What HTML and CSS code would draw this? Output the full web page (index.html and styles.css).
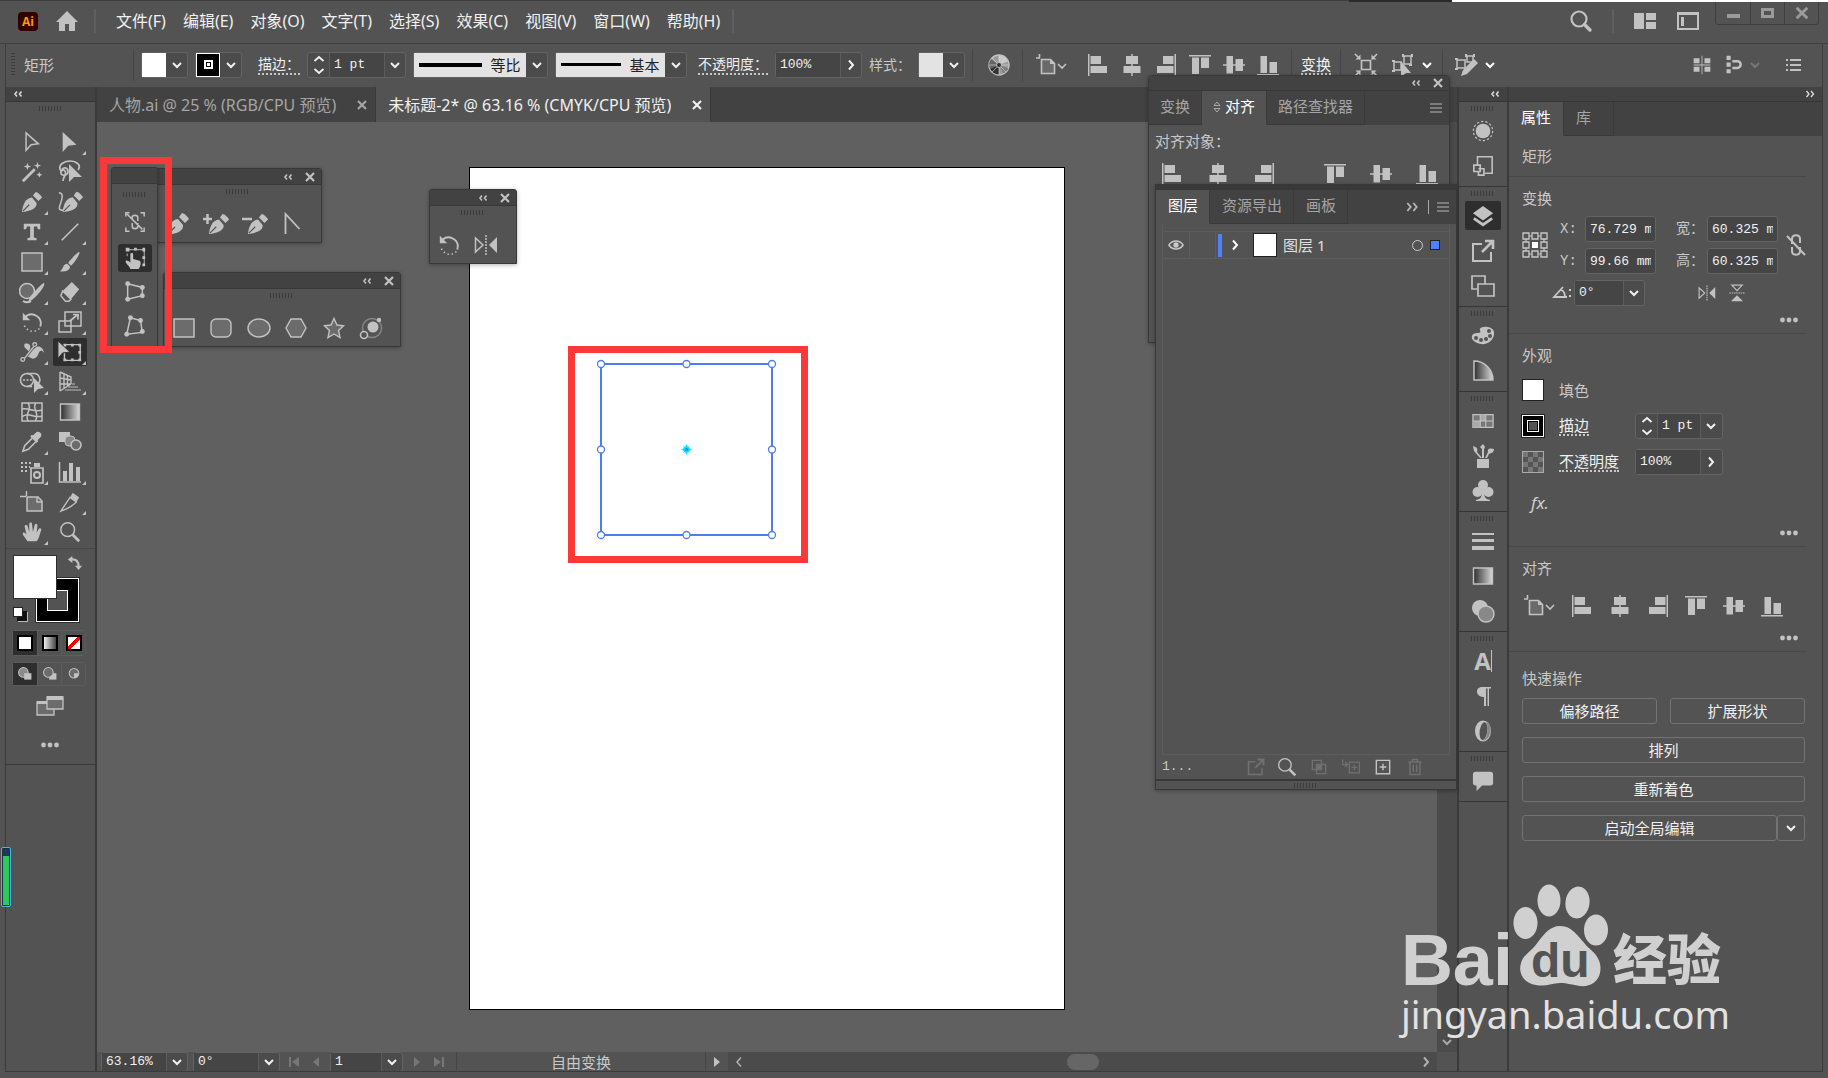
FILE: index.html
```html
<!DOCTYPE html>
<html lang="zh-CN">
<head>
    <meta charset="UTF-8">
    <meta name="viewport" content="width=device-width, initial-scale=1.0">
    <title>未标题-2* @ 63.16 % (CMYK/CPU 预览)</title>
    <link rel="stylesheet" href="styles.css">
</head>
<body>
    <!-- icon library -->
    <svg class="sprite" width="0" height="0" aria-hidden="true">
        <defs>
            <linearGradient id="fade"><stop offset="0" stop-color="#2e2e2e"/><stop offset="1" stop-color="#d8d8d8"/></linearGradient>
        </defs>
        <symbol id="down" viewBox="0 0 12 12"><path d="M2 4l4 4 4-4" fill="none" stroke="currentColor" stroke-width="2"/></symbol>
        <symbol id="right" viewBox="0 0 12 12"><path d="M4 1.500l4 4.500-4 4.500" fill="none" stroke="currentColor" stroke-width="2"/></symbol>
        <symbol id="left" viewBox="0 0 12 12"><path d="M8 1.500L4 6l4 4.500" fill="none" stroke="currentColor" stroke-width="1.500"/></symbol>
        <symbol id="spin" viewBox="0 0 12 20"><path d="M1.500 6L6 2l4.500 4M1.500 14L6 18l4.500-4" fill="none" stroke="currentColor" stroke-width="1.800"/></symbol>
        <symbol id="updown" viewBox="0 0 8 12"><path d="M1 4.500L4 1l3 3.500zM1 7.500L4 11l3-3.500z" fill="none" stroke="currentColor"/></symbol>
        <symbol id="close" viewBox="0 0 12 12"><path d="M2 2l8 8M10 2l-8 8" stroke="currentColor" stroke-width="2.200"/></symbol>
        <symbol id="collapse" viewBox="0 0 12 12"><path d="M5 3.500L3 6l2 2.500M9.500 3.500l-2 2.500 2 2.500" fill="none" stroke="currentColor" stroke-width="1.600"/></symbol>
        <symbol id="expand" viewBox="0 0 12 12"><path d="M2.500 3l2.500 3-2.500 3M7 3l2.500 3L7 9" fill="none" stroke="currentColor" stroke-width="1.400"/></symbol>
        <symbol id="menu" viewBox="0 0 12 12"><path d="M0 2h12M0 6h12M0 10h12" stroke="currentColor" stroke-width="1.200"/></symbol>
        <symbol id="play" viewBox="0 0 12 12"><path d="M3 1l6 5-6 5z" fill="currentColor"/></symbol>
        <symbol id="back" viewBox="0 0 12 12"><path d="M9 1L3 6l6 5z" fill="currentColor"/></symbol>
        <symbol id="first" viewBox="0 0 12 12"><path d="M11 1L4 6l7 5zM1 1h2v10H1z" fill="currentColor"/></symbol>
        <symbol id="last" viewBox="0 0 12 12"><path d="M1 1l7 5-7 5zM9 1h2v10H9z" fill="currentColor"/></symbol>
        <symbol id="dots" viewBox="0 0 18 6"><g fill="currentColor"><circle cx="2.500" cy="3" r="2.400"/><circle cx="9" cy="3" r="2.400"/><circle cx="15.500" cy="3" r="2.400"/></g></symbol>
        <symbol id="home" viewBox="0 0 24 24"><path d="M12 2l11 11h-3v9h-6v-7h-4v7H4v-9H1z" fill="currentColor"/></symbol>
        <symbol id="search" viewBox="0 0 24 24"><circle cx="10" cy="10" r="7.500" fill="none" stroke="currentColor" stroke-width="2.200"/><path d="M15.500 15.500L21 21" stroke="currentColor" stroke-width="3.500" stroke-linecap="round"/></symbol>
        <symbol id="arrange" viewBox="0 0 24 24"><path d="M1 4h10v16H1zM13 4h10v7H13zM13 13h10v7H13z" fill="currentColor"/></symbol>
        <symbol id="workspace" viewBox="0 0 24 24"><path d="M2 4h20v16H2z" fill="none" stroke="currentColor" stroke-width="2"/><path d="M5 8h3v9H5zM2 4h20v2H2z" fill="currentColor"/></symbol>

        <symbol id="al-left" viewBox="0 0 24 24"><path d="M2 1h1.500v22H2zM4.500 3h10.500v8H4.500zM4.500 13H21v7H4.500z" fill="currentColor"/></symbol>
        <symbol id="al-hc" viewBox="0 0 24 24"><path d="M11.200 1h1.500v22h-1.500zM6 3h12v8H6zM3.500 13h17v7h-17z" fill="currentColor"/></symbol>
        <symbol id="al-right" viewBox="0 0 24 24"><path d="M20.500 1H22v22h-1.500zM9 3h10.500v8H9zM3 13h16.500v7H3z" fill="currentColor"/></symbol>
        <symbol id="al-top" viewBox="0 0 24 24"><path d="M1 2h22v1.500H1zM4 4.500h7V21H4zM13 4.500h8V15h-8z" fill="currentColor"/></symbol>
        <symbol id="al-vc" viewBox="0 0 24 24"><path d="M1 11.200h22v1.500H1zM4.500 3h6.500v17.500H4.500zM13.500 6H21v12h-7.500z" fill="currentColor"/></symbol>
        <symbol id="al-bottom" viewBox="0 0 24 24"><path d="M1 21h22v1.500H1zM4.500 3H11v17H4.500zM13.500 9H21v11h-7.500z" fill="currentColor"/></symbol>
        <symbol id="align-to" viewBox="0 0 34 24"><path d="M7.500 6.500h9l4 4v10h-13z" fill="#6a6a6a" stroke="currentColor" stroke-width="1.600"/><path d="M16 6l5 5h-5z" fill="currentColor"/><path d="M2 5h4M5.500 1v4M24 11l4 4 4-4" fill="none" stroke="currentColor" stroke-width="1.600"/></symbol>
        <symbol id="wheel" viewBox="0 0 24 24"><circle cx="12" cy="12" r="10" fill="#9a9a9a" stroke="currentColor" stroke-width="1.400"/><path d="M12 12l-9 3.500a10 10 0 0 0 9 6z" fill="#333"/><path d="M12 12l-9 3.500A10 10 0 0 1 4 6z" fill="#666"/><path d="M12 12V2.500a10 10 0 0 1 9 6z" fill="#c8c8c8"/><path d="M12 12l9.500 3.500a10 10 0 0 1-5 5z" fill="#7c7c7c"/><path d="M12 2.500v19M2.500 12h19M5 5l14 14M19 5L5 19" stroke="#ddd" stroke-width=".6"/><circle cx="12" cy="12" r="2.500" fill="#333" stroke="#bbb"/></symbol>
        <symbol id="isolate" viewBox="0 0 24 24"><path d="M7.500 7.500h9v9h-9z" fill="none" stroke="currentColor" stroke-width="1.700"/><path d="M1 1l5 5M23 1l-5 5M1 23l5-5M23 23l-5-5" stroke="currentColor" stroke-width="1.700"/><path d="M6.500 1.500v5h-5zM17.500 1.500v5h5zM6.500 22.500v-5h-5zM17.500 22.500v-5h5z" fill="currentColor"/></symbol>
        <symbol id="similar" viewBox="0 0 24 24"><path d="M3 9h7v8H3zM13 3h7v8h-7z" fill="none" stroke="currentColor" stroke-width="1.500"/><path d="M1 8h3M1 18h3M12 1v3M21 1v3M21 12h-3" stroke="currentColor" stroke-width="2"/><path d="M10 8l10 12h-5l-5 4z" fill="currentColor"/></symbol>
        <symbol id="edit-similar" viewBox="0 0 24 24"><path d="M3 7h8v8H3zM13 3h6v6h-6z" fill="none" stroke="currentColor" stroke-width="1.500"/><path d="M1 6h3M1 16h3M12 1v3M20 1v3" stroke="currentColor" stroke-width="2"/><path d="M7 23l2-6L20 6l4 4-11 11z" fill="currentColor"/></symbol>
        <symbol id="snap-grid" viewBox="0 0 24 24"><path d="M2 4h7v6H2zM15 4h7v6h-7zM2 14h7v6H2zM15 14h7v6h-7zM11.500 1h1v22h-1zM2 11.500h20v1H2z" fill="currentColor"/></symbol>
        <symbol id="snap-point" viewBox="0 0 24 24"><path d="M3 1h5v5H3zM3 9h5v5H3zM3 17h5v5H3z" fill="currentColor"/><path d="M10 7.500h6a4 4 0 0 1 0 8h-6" fill="none" stroke="currentColor" stroke-width="3"/></symbol>
        <symbol id="list" viewBox="0 0 16 16"><path d="M1 3h2M1 8h2M1 13h2M5 3h11M5 8h11M5 13h11" stroke="currentColor" stroke-width="2"/></symbol>

        <symbol id="select" viewBox="0 0 24 24"><path d="M5.500 2v19l5.500-6 8-1z" fill="none" stroke="currentColor" stroke-width="1.600"/></symbol>
        <symbol id="direct" viewBox="0 0 24 24"><path d="M4 1v22l6-7 9-1z" fill="currentColor"/></symbol>
        <symbol id="wand" viewBox="0 0 24 24"><path d="M2 22L15 9" stroke="currentColor" stroke-width="3"/><path d="M7 2l1 3 3 1-3 1-1 3-1-3-3-1 3-1zM18 1l1 3 3 1-3 1-1 3-1-3-3-1 3-1zM20 12l1 2 2 1-2 1-1 2-1-2-2-1 2-1z" fill="currentColor"/></symbol>
        <symbol id="lasso" viewBox="0 0 24 24"><path d="M3 11C-1 5 6 1 12 1s12 4 8 9M5 11c-3-3 4-5 5 0s-8 6-7 1 6-1 4 3-2 4-2 6" fill="none" stroke="currentColor" stroke-width="1.700"/><path d="M11 4v18l5-5h8z" fill="currentColor"/></symbol>
        <symbol id="pen" viewBox="0 0 24 24"><path d="M1 23C2 14 5 8 12 7l5 6c1 6-7 9-16 10z" fill="currentColor"/><path d="M13 5l3-4c2 0 6 4 7 6l-4 4z" fill="currentColor"/><path d="M2 22l7-7" stroke="#535353" stroke-width="1.200"/></symbol>
        <symbol id="curve-pen" viewBox="0 0 28 24"><path d="M6 23c1-9 4-15 11-16l5 6c1 6-7 9-16 10z" fill="currentColor"/><path d="M18 5l3-4c2 0 6 4 7 6l-4 4z" fill="currentColor"/><path d="M7 22l7-7" stroke="#535353" stroke-width="1.200"/><path d="M2 2c5 0 4 6 2 11s-3 8 3 8" fill="none" stroke="currentColor" stroke-width="1.600"/></symbol>
        <symbol id="type" viewBox="0 0 24 24"><path d="M3 3h18v6h-2.500l-1-3H14v12l3 .8V21H7v-2.200l3-.8V6H6.500l-1 3H3z" fill="currentColor"/></symbol>
        <symbol id="line" viewBox="0 0 24 24"><path d="M3 21L21 3" stroke="currentColor" stroke-width="1.800"/></symbol>
        <symbol id="rect" viewBox="0 0 24 24"><path d="M2 3h20v18H2z" fill="#6c6c6c" stroke="currentColor" stroke-width="1.500"/></symbol>
        <symbol id="brush" viewBox="0 0 24 24"><path d="M22 1c2 1-5 12-9 15l-3-3C13 9 20 1 22 1zM9 14l3 3c0 5-6 6-11 5 4-2 3-8 8-8z" fill="currentColor"/></symbol>
        <symbol id="shaper" viewBox="0 0 26 24"><circle cx="8" cy="11" r="7.500" fill="#6c6c6c" stroke="currentColor" stroke-width="1.500"/><path d="M25 3c2 2-6 12-11 16-2 2-5 3-5 3l2-5C15 12 24 2 25 3z" fill="currentColor"/><path d="M4 21c3 2 5 2 8 0" fill="none" stroke="currentColor" stroke-width="2"/></symbol>
        <symbol id="eraser" viewBox="0 0 24 24"><path d="M14 1l8 8-9 11-9-9z" fill="currentColor"/><path d="M4 11l9 9-2 2H7l-5-6z" fill="none" stroke="currentColor" stroke-width="1.600"/></symbol>
        <symbol id="rotate" viewBox="0 0 24 24"><path d="M5 6c8-6 19 1 16 11" fill="none" stroke="currentColor" stroke-width="2"/><path d="M2 2v8h8z" fill="currentColor"/><path d="M20 19c-5 6-15 3-17-5" fill="none" stroke="currentColor" stroke-width="1.800" stroke-dasharray="1.500 3"/></symbol>
        <symbol id="scale" viewBox="0 0 24 24"><path d="M7 2h16v14H7zM1 11h12v11H1z" fill="none" stroke="currentColor" stroke-width="1.500"/><path d="M12 11l7-6M15 4.500h5v5" fill="none" stroke="currentColor" stroke-width="1.700"/></symbol>
        <symbol id="width" viewBox="0 0 26 24"><path d="M5 3c4-1 7 1 6 5 2 2 4 1 6-1s8-1 9 6c-3-4-5-2-6 1-2 6-7 6-9 4-3-2-5 0-7 2 1-4 5-5 5-8 0-4-6-3-4-9z" fill="currentColor"/><path d="M5 19L15 6" stroke="#535353" stroke-width="3"/><path d="M4 20L15 6" stroke="currentColor" stroke-width="1.500"/><circle cx="3" cy="20" r="2" fill="#535353" stroke="currentColor" stroke-width="1.400"/><circle cx="16" cy="4" r="2" fill="#535353" stroke="currentColor" stroke-width="1.400"/></symbol>
        <symbol id="free" viewBox="0 0 28 24"><path d="M8 4h17v17H8z" fill="none" stroke="currentColor" stroke-width="1.500"/><path d="M7 3h3v3H7zM15 3h3v3h-3zM23 3h3v3h-3zM23 11h3v3h-3zM23 19h3v3h-3zM15 19h3v3h-3zM7 19h3v3H7z" fill="currentColor"/><path d="M1 0v19l5-6 8-1z" fill="currentColor" stroke="#2e2e2e"/></symbol>
        <symbol id="builder" viewBox="0 0 26 24"><circle cx="8" cy="10" r="6.500" fill="none" stroke="currentColor" stroke-width="1.500"/><path d="M8 3.500h6a6 6 0 0 1 4 11M8 16.500h5" fill="none" stroke="currentColor" stroke-width="1.500"/><path d="M4 10h11" stroke="currentColor" stroke-width="1.500" stroke-dasharray="2 1.500"/><path d="M15 8v15l4-4 6-1z" fill="currentColor"/></symbol>
        <symbol id="perspective" viewBox="0 0 24 24"><path d="M2 2v19M2 2l11 5v7M2 21l11-7M2 8l11 2M2 14h11M6 4v14M9.500 5v11" fill="none" stroke="currentColor" stroke-width="1.400"/><path d="M14 14h3M10 17h10M7 20h16" stroke="#999" stroke-width="1.500"/></symbol>
        <symbol id="mesh" viewBox="0 0 24 24"><path d="M2 3h20v18H2zM2 9c7-2 12 4 20 1M2 17c6-6 13 2 20-1M8 3c5 6-4 11 0 18M16 3c-5 5 5 11-1 18" fill="none" stroke="currentColor" stroke-width="1.500"/></symbol>
        <symbol id="gradient" viewBox="0 0 24 24"><path d="M2.500 4h19v16h-19z" fill="url(#fade)" stroke="currentColor" stroke-width="1.400"/></symbol>
        <symbol id="dropper" viewBox="0 0 24 24"><path d="M17 1c4-1 7 3 4 6l-3 3 1 1-2 2-7-7 2-2 1 1z" fill="currentColor"/><path d="M12 8L4 16l-2 6 6-2 8-8" fill="none" stroke="currentColor" stroke-width="1.700"/></symbol>
        <symbol id="blend" viewBox="0 0 24 24"><path d="M1 2h11v10H1z" fill="currentColor"/><rect x="7" y="6" width="10" height="10" rx="4" fill="#888" stroke="currentColor"/><circle cx="18" cy="15" r="5" fill="#6c6c6c" stroke="currentColor" stroke-width="1.600"/></symbol>
        <symbol id="spray" viewBox="0 0 26 24"><path d="M12 8h12v15H12z" fill="none" stroke="currentColor" stroke-width="1.700"/><path d="M15 3h6v4h-6z" fill="currentColor"/><circle cx="18" cy="15" r="3" fill="none" stroke="currentColor" stroke-width="2"/><path d="M2 3h11M2 7h9M2 11h7" stroke="currentColor" stroke-width="2" stroke-dasharray="2 2"/></symbol>
        <symbol id="graph" viewBox="0 0 24 24"><path d="M1.500 2v20H23" fill="none" stroke="currentColor" stroke-width="1.500"/><path d="M5 11h4v10H5zM11 3h4v18h-4zM18 7h4v14h-4z" fill="currentColor"/></symbol>
        <symbol id="artboard" viewBox="0 0 24 24"><path d="M7 7h11l4 4v10H7z" fill="#6c6c6c" stroke="currentColor" stroke-width="1.500"/><path d="M0 6.500h6M6.500 1v5M17 7v5h5" fill="none" stroke="currentColor" stroke-width="1.400"/></symbol>
        <symbol id="slice" viewBox="0 0 24 24"><path d="M15 2l7 5-3 5-7-5z" fill="currentColor"/><path d="M12 7l7 5C14 17 8 20 2 22z" fill="none" stroke="currentColor" stroke-width="1.500"/></symbol>
        <symbol id="hand" viewBox="0 0 24 24"><path d="M7 22c-2-4-6-7-5-9 1-1 3 0 4 2L4 6c0-2 2-2 3-1l2 7V3c0-2 3-2 3 0l1 9 2-8c1-2 3-1 3 1l-1 8 2-4c1-2 4-1 3 1-2 5-2 9-5 12z" fill="currentColor"/></symbol>
        <symbol id="zoom" viewBox="0 0 24 24"><circle cx="9.500" cy="9.500" r="7.500" fill="none" stroke="currentColor" stroke-width="1.600"/><path d="M15 15l7 7" stroke="currentColor" stroke-width="3"/></symbol>
        <symbol id="swap" viewBox="0 0 18 18"><path d="M4 5c6-1 9 2 9 8" fill="none" stroke="currentColor" stroke-width="2.500"/><path d="M1 5l5-4v8zM13 17l-4-5h8z" fill="currentColor"/></symbol>
        <symbol id="screen" viewBox="0 0 28 22"><path d="M1 7h17v13H1z" fill="#6c6c6c" stroke="currentColor" stroke-width="1.300"/><path d="M11 2h16v12H11z" fill="#6c6c6c" stroke="currentColor" stroke-width="1.300"/><path d="M11 1h16v4H11zM1 6h10v3H1z" fill="currentColor"/></symbol>
        <symbol id="draw-normal" viewBox="0 0 20 20"><circle cx="8" cy="8" r="6" fill="#8b8b8b" stroke="currentColor" stroke-width="1.300"/><path d="M9 9h9v8H9z" fill="currentColor"/></symbol>
        <symbol id="draw-behind" viewBox="0 0 20 20"><path d="M9 9h9v8H9z" fill="currentColor"/><circle cx="8" cy="8" r="6" fill="#6c6c6c" stroke="currentColor" stroke-width="1.300"/></symbol>
        <symbol id="draw-inside" viewBox="0 0 20 20"><circle cx="10" cy="9" r="6" fill="#6c6c6c" stroke="currentColor" stroke-width="1.300"/><path d="M10 9h6a6 6 0 0 1-6 6z" fill="currentColor"/></symbol>

        <symbol id="unlink" viewBox="0 0 24 24"><path d="M8 11V6c0-5 8-5 8 0v4M8 14v4c0 5 8 5 8 0v-4" fill="none" stroke="currentColor" stroke-width="2"/><path d="M3 3l18 19" stroke="currentColor" stroke-width="2"/></symbol>
        <symbol id="constrain" viewBox="0 0 24 24"><path d="M9 10V7c0-3 6-3 6 0v4M9 13v4c0 3 6 3 6 0v-4M3 3l17 17" fill="none" stroke="currentColor" stroke-width="1.700"/><path d="M2 6V2h4M18 2h4v4M22 18v4h-4M6 22H2v-4" fill="none" stroke="currentColor" stroke-width="1.600"/></symbol>
        <symbol id="touch" viewBox="0 0 26 24"><path d="M5 3h18v17" fill="none" stroke="currentColor" stroke-width="1"/><path d="M3 1h4v4H3zM4 7h1v3H4zM12 1h3v3h-3zM21 1h3v4h-3zM21 10h3v3h-3zM21 18h3v3h-3z" fill="currentColor"/><path d="M8 24c-1-4-6-6-5-9 1-1 3 0 5 2V8c0-2 3-2 3 0v5l7 2c2 1 1 6-1 9z" fill="currentColor"/></symbol>
        <symbol id="persp-distort" viewBox="0 0 24 24"><path d="M4 3l16 4v9L4 20z" fill="none" stroke="currentColor" stroke-width="1.600"/><g fill="currentColor"><circle cx="4" cy="3" r="2.700"/><circle cx="20" cy="7" r="2.700"/><circle cx="20" cy="16" r="2.700"/><circle cx="4" cy="20" r="2.700"/></g></symbol>
        <symbol id="free-distort" viewBox="0 0 24 24"><path d="M7 3l11 3 2 13-17 2z" fill="none" stroke="currentColor" stroke-width="1.600"/><g fill="currentColor"><circle cx="7" cy="3" r="2.700"/><circle cx="18" cy="6" r="2.700"/><circle cx="20" cy="18" r="2.700"/><circle cx="3" cy="21" r="2.700"/></g></symbol>
        <symbol id="pen-add" viewBox="0 0 28 24"><use href="#pen" x="6" y="1" width="22" height="22"/><path d="M1 7h9M5.500 2v10" stroke="currentColor" stroke-width="2.500"/></symbol>
        <symbol id="pen-remove" viewBox="0 0 28 24"><use href="#pen" x="6" y="1" width="22" height="22"/><path d="M1 7h10" stroke="currentColor" stroke-width="2.500"/></symbol>
        <symbol id="anchor" viewBox="0 0 24 24"><path d="M4.500 22V2l14 15" fill="none" stroke="currentColor" stroke-width="1.800"/></symbol>
        <symbol id="round-rect" viewBox="0 0 24 24"><rect x="2" y="3" width="20" height="18" rx="5" fill="#6c6c6c" stroke="currentColor" stroke-width="1.400"/></symbol>
        <symbol id="ellipse" viewBox="0 0 24 24"><ellipse cx="12" cy="12" rx="11" ry="9" fill="#6c6c6c" stroke="currentColor" stroke-width="1.400"/></symbol>
        <symbol id="polygon" viewBox="0 0 24 24"><path d="M7 3h10l5 9-5 9H7l-5-9z" fill="#6c6c6c" stroke="currentColor" stroke-width="1.400"/></symbol>
        <symbol id="star" viewBox="0 0 24 24"><path d="M12 2.500l3 6.500 6.500.7-5 4.800 1.500 7-6-3.500L6 21.500l1.500-7-5-4.800L9 9z" fill="#6c6c6c" stroke="currentColor" stroke-width="1.400"/></symbol>
        <symbol id="flare" viewBox="0 0 24 24"><circle cx="13" cy="12" r="9.500" fill="none" stroke="#858585" stroke-width="1.500"/><circle cx="14" cy="11" r="5.500" fill="currentColor"/><circle cx="5" cy="19" r="3.500" fill="#535353" stroke="currentColor" stroke-width="1.600"/><circle cx="20" cy="4" r="2.200" fill="currentColor"/></symbol>
        <symbol id="reflect" viewBox="0 0 24 24"><path d="M1.500 5v14L9 12z" fill="none" stroke="currentColor" stroke-width="1.500"/><path d="M23 4v16l-8-8z" fill="currentColor"/><path d="M12 2v20" stroke="currentColor" stroke-width="1.500" stroke-dasharray="2 1"/></symbol>

        <symbol id="appearance" viewBox="0 0 24 24"><circle cx="12" cy="12" r="8" fill="currentColor"/><circle cx="12" cy="12" r="10.500" fill="none" stroke="currentColor" stroke-width="1.300" stroke-dasharray="2.500 2.200"/></symbol>
        <symbol id="asset" viewBox="0 0 24 24"><path d="M6 11V2h16v18H14" fill="none" stroke="currentColor" stroke-width="1.700"/><path d="M2 11h7v7H2zM7 15h6v7H7v-4" fill="none" stroke="currentColor" stroke-width="1.800"/></symbol>
        <symbol id="layers" viewBox="0 0 24 24"><path d="M12 1l11 8-11 8L1 9z" fill="currentColor"/><path d="M2 14.500l10 7 10-7" fill="none" stroke="currentColor" stroke-width="3"/></symbol>
        <symbol id="export" viewBox="0 0 24 24"><path d="M11 5H2v17h18v-9" fill="none" stroke="currentColor" stroke-width="2"/><path d="M11 13l10-10M14 2h8v8" fill="none" stroke="currentColor" stroke-width="2.600"/></symbol>
        <symbol id="boards" viewBox="0 0 24 24"><path d="M6 15H1V2h13v8M7 10h16v12H7z" fill="none" stroke="currentColor" stroke-width="1.700"/></symbol>
        <symbol id="palette" viewBox="0 0 24 24"><path d="M13 3c7-1 11 3 10 8s-6 10-13 9S0 15 1 12s4-3 6-3 3-1 2-3 2-3 4-3z" fill="currentColor"/><g fill="#535353"><circle cx="5" cy="14" r="2"/><circle cx="10" cy="16" r="2"/><circle cx="15" cy="15" r="2"/><circle cx="19" cy="12" r="2"/><circle cx="18" cy="7" r="2"/></g></symbol>
        <symbol id="guide" viewBox="0 0 24 24"><path d="M3 2a19 19 0 0 1 19 19H3z" fill="url(#fade)" stroke="currentColor" stroke-width="1.500"/></symbol>
        <symbol id="swatches" viewBox="0 0 24 24"><path d="M1 5h22v14H1z" fill="#777" stroke="currentColor" stroke-width="1.400"/><path d="M9 5h6v7H9zM1 12h8v7H1z" fill="#aaa"/><path d="M9 5v14M15 5v14M1 12h22" stroke="currentColor" stroke-width="1.200"/></symbol>
        <symbol id="brushes" viewBox="0 0 24 24"><path d="M6 15h12v9H6zM9 14L3 7 2 2c4 1 5 3 4 6l5 6zM11 14V5L9 3l3-3 2 3-1 2v9zM14 14l3-6c-1-4 3-4 6-3 0 4-3 4-5 5l-2 4z" fill="currentColor"/></symbol>
        <symbol id="club" viewBox="0 0 24 24"><g fill="currentColor"><circle cx="12" cy="6" r="5"/><circle cx="6.500" cy="13" r="5"/><circle cx="17.500" cy="13" r="5"/><path d="M11 10h2c0 8 1 10 6 11v1H5v-1c5-1 6-3 6-11z"/></g></symbol>
        <symbol id="stroke" viewBox="0 0 24 24"><path d="M1 4h22v2H1zM1 10h22v3H1zM1 17h22v4H1z" fill="currentColor"/></symbol>
        <symbol id="transparency" viewBox="0 0 24 24"><circle cx="9" cy="9" r="8" fill="currentColor"/><circle cx="15" cy="15" r="8" fill="#888" stroke="currentColor" stroke-width="1.400"/></symbol>
        <symbol id="para" viewBox="0 0 24 24"><path d="M11 3h9v1.500h-2V22h-1.500V4.500H15V22h-2v-9C4 13 4 3 11 3z" fill="currentColor"/></symbol>
        <symbol id="opentype" viewBox="0 0 24 24"><ellipse cx="12" cy="12" rx="8" ry="10.500" fill="currentColor"/><path d="M15 2c7 2 6 18-3 20 5-4 6-15 3-20z" fill="#888"/><ellipse cx="12.500" cy="12" rx="3.800" ry="9" fill="#535353" transform="rotate(8 12 12)"/></symbol>
        <symbol id="comment" viewBox="0 0 24 24"><path d="M4 2h16a3 3 0 0 1 3 3v9a3 3 0 0 1-3 3h-9l-6 6v-6H4a3 3 0 0 1-3-3V5a3 3 0 0 1 3-3z" fill="currentColor"/></symbol>

        <symbol id="eye" viewBox="0 0 18 12"><path d="M1 6c4-6 12-6 16 0-4 6-12 6-16 0z" fill="none" stroke="currentColor" stroke-width="1.600"/><circle cx="9" cy="6" r="3" fill="currentColor"/></symbol>
        <symbol id="mask" viewBox="0 0 24 24"><path d="M4 4h11v11H4zM9 9h11v11H9z" fill="none" stroke="currentColor" stroke-width="1.600"/><path d="M9 9h6v6H9z" fill="currentColor"/></symbol>
        <symbol id="sublayer" viewBox="0 0 24 24"><path d="M10 6h12v13H10zM16 9v7M12.500 12.500h7M2 3v6h5M5 6l3 3-3 3" fill="none" stroke="currentColor" stroke-width="1.500"/></symbol>
        <symbol id="new-layer" viewBox="0 0 24 24"><path d="M4 4h16v16H4zM12 8v8M8 12h8" fill="none" stroke="currentColor" stroke-width="1.700"/></symbol>
        <symbol id="trash" viewBox="0 0 24 24"><path d="M4 6h16M9 6V3h6v3M6 6v15h12V6M10 9v9M14 9v9" fill="none" stroke="currentColor" stroke-width="1.700"/></symbol>
        <symbol id="ref-point" viewBox="0 0 26 26"><path d="M4 4h18v18H4z" fill="none" stroke="currentColor" stroke-width="1.200"/><g fill="#535353" stroke="currentColor" stroke-width="1.300"><path d="M1 1h6v6H1zM10 1h6v6h-6zM19 1h6v6h-6zM1 10h6v6H1zM19 10h6v6h-6zM1 19h6v6H1zM10 19h6v6h-6zM19 19h6v6h-6z"/></g><path d="M10 10h6v6h-6z" fill="#fff"/></symbol>
        <symbol id="angle" viewBox="0 0 20 16"><path d="M11 2L2 12h13M9 5c3 1 4 4 4 7" fill="none" stroke="currentColor" stroke-width="1.800"/><path d="M17 4h2v2h-2zM17 10h2v2h-2z" fill="currentColor"/></symbol>
    </svg>

    <header class="title-bar">
        <span class="logo">Ai</span>
        <button class="icon-btn" aria-label="主页"><svg class="icon"><use href="#home"/></svg></button>
        <span class="rule"></span>
        <nav class="menus">
            <button>文件(F)</button>
            <button>编辑(E)</button>
            <button>对象(O)</button>
            <button>文字(T)</button>
            <button>选择(S)</button>
            <button>效果(C)</button>
            <button>视图(V)</button>
            <button>窗口(W)</button>
            <button>帮助(H)</button>
        </nav>
        <span class="rule"></span>
        <div class="title-tools">
            <button class="icon-btn" aria-label="搜索"><svg class="icon"><use href="#search"/></svg></button>
            <span class="rule"></span>
            <button class="icon-btn" aria-label="排列文档"><svg class="icon"><use href="#arrange"/></svg></button>
            <button class="icon-btn" aria-label="切换工作区"><svg class="icon"><use href="#workspace"/></svg></button>
        </div>
        <div class="window-buttons">
            <button aria-label="最小化"><i class="min"></i></button>
            <button aria-label="最大化"><i class="max"></i></button>
            <button aria-label="关闭"><svg class="icon-16"><use href="#close"/></svg></button>
        </div>
    </header>

    <section class="control-bar">
        <span class="grip-v"></span>
        <span class="object-type">矩形</span>
        <span class="sep"></span>
        <div class="combo"><button class="swatch" aria-label="填色"></button><button class="drop" aria-label="填色选项"><svg class="icon-12"><use href="#down"/></svg></button></div>
        <div class="combo"><button class="swatch stroked" aria-label="描边颜色"><i></i></button><button class="drop" aria-label="描边选项"><svg class="icon-12"><use href="#down"/></svg></button></div>
        <label class="link-label stroke-label" for="strokeWidth">描边：</label>
        <div class="combo">
            <button class="drop" aria-label="调整粗细"><svg class="icon-spin"><use href="#spin"/></svg></button>
            <input class="w-55" type="text" id="strokeWidth" value="1 pt">
            <button class="drop" aria-label="粗细列表"><svg class="icon-12"><use href="#down"/></svg></button>
        </div>
        <div class="combo"><button class="profile"><i></i>等比</button><button class="drop" aria-label="宽度配置文件"><svg class="icon-12"><use href="#down"/></svg></button></div>
        <div class="combo"><button class="profile basic"><i></i>基本</button><button class="drop" aria-label="画笔定义"><svg class="icon-12"><use href="#down"/></svg></button></div>
        <label class="link-label opacity-label" for="opacity">不透明度：</label>
        <div class="combo"><input class="w-64" type="text" id="opacity" value="100%"><button class="drop" aria-label="不透明度选项"><svg class="icon-12"><use href="#right"/></svg></button></div>
        <span class="style-label">样式：</span>
        <div class="combo"><button class="swatch gray" aria-label="图形样式"></button><button class="drop" aria-label="样式列表"><svg class="icon-12"><use href="#down"/></svg></button></div>
        <span class="sep"></span>
        <button class="icon-btn wheel" aria-label="重新着色图稿"><svg class="icon"><use href="#wheel"/></svg></button>
        <span class="sep"></span>
        <div class="align-group">
            <button class="icon-btn align-to" aria-label="对齐方式"><svg class="icon-wide"><use href="#align-to"/></svg></button>
            <button class="icon-btn" aria-label="左对齐"><svg class="icon"><use href="#al-left"/></svg></button>
            <button class="icon-btn" aria-label="水平居中"><svg class="icon"><use href="#al-hc"/></svg></button>
            <button class="icon-btn" aria-label="右对齐"><svg class="icon"><use href="#al-right"/></svg></button>
            <button class="icon-btn" aria-label="顶对齐"><svg class="icon"><use href="#al-top"/></svg></button>
            <button class="icon-btn" aria-label="垂直居中"><svg class="icon"><use href="#al-vc"/></svg></button>
            <button class="icon-btn" aria-label="底对齐"><svg class="icon"><use href="#al-bottom"/></svg></button>
        </div>
        <span class="sep"></span>
        <a class="link-label transform-link" href="#">变换</a>
        <span class="sep"></span>
        <button class="icon-btn isolate" aria-label="隔离"><svg class="icon"><use href="#isolate"/></svg></button>
        <button class="icon-btn bright" aria-label="选择类似对象"><svg class="icon"><use href="#similar"/></svg><svg class="icon-12"><use href="#down"/></svg></button>
        <span class="sep"></span>
        <button class="icon-btn bright edit" aria-label="编辑类似形状"><svg class="icon"><use href="#edit-similar"/></svg><svg class="icon-12"><use href="#down"/></svg></button>
        <div class="control-end">
            <button class="icon-btn" aria-label="对齐像素"><svg class="icon-20"><use href="#snap-grid"/></svg></button>
            <button class="icon-btn dim-arrow" aria-label="对齐选项"><svg class="icon-20"><use href="#snap-point"/></svg><svg class="icon-12"><use href="#down"/></svg></button>
            <button class="icon-btn" aria-label="面板菜单"><svg class="icon-16"><use href="#list"/></svg></button>
        </div>
    </section>

    <main class="workspace">
        <aside class="toolbar">
            <div class="dock-head left"><svg class="icon-12"><use href="#collapse"/></svg></div>
            <span class="grip"></span>
            <div class="tools">
                <button class="solo" aria-label="选择"><svg class="icon-22"><use href="#select"/></svg></button>
                <button aria-label="直接选择"><svg class="icon-22"><use href="#direct"/></svg></button>
                <button class="solo" aria-label="魔棒"><svg class="icon-22"><use href="#wand"/></svg></button>
                <button class="solo" aria-label="套索"><svg class="icon"><use href="#lasso"/></svg></button>
                <button aria-label="钢笔"><svg class="icon-22"><use href="#pen"/></svg></button>
                <button class="solo" aria-label="曲率"><svg class="icon-26"><use href="#curve-pen"/></svg></button>
                <button aria-label="文字"><svg class="icon-22"><use href="#type"/></svg></button>
                <button aria-label="直线段"><svg class="icon-22"><use href="#line"/></svg></button>
                <button aria-label="矩形工具"><svg class="icon"><use href="#rect"/></svg></button>
                <button aria-label="画笔"><svg class="icon-22"><use href="#brush"/></svg></button>
                <button aria-label="Shaper"><svg class="icon-26"><use href="#shaper"/></svg></button>
                <button aria-label="橡皮擦"><svg class="icon-22"><use href="#eraser"/></svg></button>
                <button aria-label="旋转"><svg class="icon-22"><use href="#rotate"/></svg></button>
                <button aria-label="比例缩放"><svg class="icon"><use href="#scale"/></svg></button>
                <button aria-label="宽度"><svg class="icon"><use href="#width"/></svg></button>
                <button class="active" aria-label="自由变换"><svg class="icon-26"><use href="#free"/></svg></button>
                <button aria-label="形状生成器"><svg class="icon-26"><use href="#builder"/></svg></button>
                <button aria-label="透视网格"><svg class="icon"><use href="#perspective"/></svg></button>
                <button class="solo" aria-label="网格"><svg class="icon"><use href="#mesh"/></svg></button>
                <button class="solo" aria-label="渐变"><svg class="icon"><use href="#gradient"/></svg></button>
                <button aria-label="吸管"><svg class="icon-22"><use href="#dropper"/></svg></button>
                <button class="solo" aria-label="混合"><svg class="icon"><use href="#blend"/></svg></button>
                <button aria-label="符号喷枪"><svg class="icon-26"><use href="#spray"/></svg></button>
                <button aria-label="柱形图"><svg class="icon"><use href="#graph"/></svg></button>
                <button class="solo" aria-label="画板工具"><svg class="icon"><use href="#artboard"/></svg></button>
                <button aria-label="切片"><svg class="icon-22"><use href="#slice"/></svg></button>
                <button aria-label="抓手"><svg class="icon-22"><use href="#hand"/></svg></button>
                <button class="solo" aria-label="缩放"><svg class="icon-22"><use href="#zoom"/></svg></button>
            </div>
            <div class="color-box">
                <span class="fore"></span>
                <button class="icon-btn swap" aria-label="互换填色和描边"><svg class="icon-16"><use href="#swap"/></svg></button>
                <span class="back"><i></i></span>
                <span class="defaults"></span>
            </div>
            <div class="modes">
                <button class="active" aria-label="颜色"><i class="chip"></i></button>
                <button aria-label="渐变填色"><i class="chip fade"></i></button>
                <button aria-label="无"><i class="chip none"></i></button>
            </div>
            <div class="modes draw">
                <button class="active" aria-label="正常绘图"><svg class="icon-16"><use href="#draw-normal"/></svg></button>
                <button aria-label="背面绘图"><svg class="icon-16"><use href="#draw-behind"/></svg></button>
                <button aria-label="内部绘图"><svg class="icon-16"><use href="#draw-inside"/></svg></button>
            </div>
            <button class="icon-btn screen-mode" aria-label="屏幕模式"><svg class="icon-28"><use href="#screen"/></svg></button>
            <button class="icon-btn more-tools" aria-label="编辑工具栏"><svg class="icon-dots"><use href="#dots"/></svg></button>
        </aside>

        <section class="document">
            <div class="doc-tabs">
                <button class="doc-tab">人物.ai @ 25 % (RGB/CPU 预览)<svg class="icon-12"><use href="#close"/></svg></button>
                <button class="doc-tab active">未标题-2* @ 63.16 % (CMYK/CPU 预览)<svg class="icon-12"><use href="#close"/></svg></button>
            </div>
            <div class="view">
                <div class="canvas">
                    <div class="artboard">
                        <svg class="selection" viewBox="0 0 240 217">
                            <path d="M3.500 3.500h233v210H3.500z" fill="none" stroke="#fc3838" stroke-width="7"/>
                            <path d="M33 18h171v171H33z" fill="none" stroke="#4d7ef0" stroke-width="2"/>
                            <g fill="#fff" stroke="#4d7ef0" stroke-width="1.300">
                                <circle cx="33" cy="18" r="3.500"/><circle cx="118.500" cy="18" r="3.500"/><circle cx="204" cy="18" r="3.500"/>
                                <circle cx="33" cy="103.500" r="3.500"/><circle cx="204" cy="103.500" r="3.500"/>
                                <circle cx="33" cy="189" r="3.500"/><circle cx="118.500" cy="189" r="3.500"/><circle cx="204" cy="189" r="3.500"/>
                            </g>
                            <path d="M118.500 98l1.500 3 2-1-1 2 3 1.500-3 1.500 1 2-2-1-1.500 3-1.500-3-2 1 1-2-3-1.500 3-1.500-1-2 2 1z" fill="#00e8ff"/>
                            <circle cx="118.500" cy="103.500" r="1.800" fill="#3f86f0"/>
                        </svg>
                    </div>
                </div>
                <div class="v-scroll"><svg class="icon-12"><use href="#down"/></svg></div>
            </div>
            <footer class="status">
                <div class="combo"><input class="w-64" type="text" aria-label="缩放比例" value="63.16%"><button class="drop" aria-label="缩放列表"><svg class="icon-12"><use href="#down"/></svg></button></div>
                <div class="combo"><input class="w-64" type="text" aria-label="旋转视图" value="0°"><button class="drop" aria-label="角度列表"><svg class="icon-12"><use href="#down"/></svg></button></div>
                <div class="pager">
                    <svg class="icon-12"><use href="#first"/></svg>
                    <svg class="icon-12"><use href="#back"/></svg>
                </div>
                <div class="combo"><input class="w-50" type="text" aria-label="画板" value="1"><button class="drop" aria-label="画板列表"><svg class="icon-12"><use href="#down"/></svg></button></div>
                <div class="pager">
                    <svg class="icon-12"><use href="#play"/></svg>
                    <svg class="icon-12"><use href="#last"/></svg>
                </div>
                <span class="tool-name">自由变换</span>
                <button class="icon-btn status-more" aria-label="状态栏选项"><svg class="icon-12"><use href="#play"/></svg></button>
                <div class="h-scroll"><svg class="icon-12"><use href="#left"/></svg><i class="thumb"></i><svg class="icon-12"><use href="#right"/></svg></div>
            </footer>
        </section>

        <aside class="dock">
            <div class="dock-head"><svg class="icon-12"><use href="#collapse"/></svg></div>
            <div class="dock-group">
                <button aria-label="外观"><svg class="icon-22"><use href="#appearance"/></svg></button>
                <button aria-label="图形样式面板"><svg class="icon-22"><use href="#asset"/></svg></button>
            </div>
            <div class="dock-group">
                <button class="active" aria-label="图层"><svg class="icon-22"><use href="#layers"/></svg></button>
                <button aria-label="资源导出"><svg class="icon"><use href="#export"/></svg></button>
                <button aria-label="画板面板"><svg class="icon"><use href="#boards"/></svg></button>
            </div>
            <div class="dock-group">
                <button aria-label="颜色面板"><svg class="icon"><use href="#palette"/></svg></button>
                <button aria-label="颜色参考"><svg class="icon"><use href="#guide"/></svg></button>
            </div>
            <div class="dock-group">
                <button aria-label="色板"><svg class="icon-22"><use href="#swatches"/></svg></button>
                <button aria-label="画笔面板"><svg class="icon"><use href="#brushes"/></svg></button>
                <button aria-label="符号"><svg class="icon"><use href="#club"/></svg></button>
            </div>
            <div class="dock-group">
                <button aria-label="描边面板"><svg class="icon"><use href="#stroke"/></svg></button>
                <button aria-label="渐变面板"><svg class="icon"><use href="#gradient"/></svg></button>
                <button aria-label="透明度"><svg class="icon"><use href="#transparency"/></svg></button>
            </div>
            <div class="dock-group">
                <button class="char">A</button>
                <button aria-label="段落"><svg class="icon"><use href="#para"/></svg></button>
                <button aria-label="OpenType"><svg class="icon"><use href="#opentype"/></svg></button>
            </div>
            <div class="dock-group">
                <button aria-label="注释"><svg class="icon-22"><use href="#comment"/></svg></button>
            </div>
        </aside>

        <aside class="properties">
            <div class="dock-head"><svg class="icon-12"><use href="#expand"/></svg></div>
            <div class="panel-tabs">
                <button class="active">属性</button>
                <button>库</button>
            </div>
            <section class="prop-section">
                <h2>矩形</h2>
            </section>
            <section class="prop-section">
                <h2>变换</h2>
                <div class="transform-grid">
                    <svg class="ref-point"><use href="#ref-point"/></svg>
                    <label for="posX">X:</label><input type="text" id="posX" value="76.729 mm">
                    <label for="sizeW">宽：</label><input type="text" id="sizeW" value="60.325 mm">
                    <button class="icon-btn unlink" aria-label="约束宽高比"><svg class="icon"><use href="#unlink"/></svg></button>
                    <label for="posY">Y:</label><input type="text" id="posY" value="99.66 mm">
                    <label for="sizeH">高：</label><input type="text" id="sizeH" value="60.325 mm">
                </div>
                <div class="angle-row">
                    <svg class="icon-angle"><use href="#angle"/></svg>
                    <div class="combo"><input class="w-48" type="text" aria-label="旋转角度" value="0°"><button class="drop" aria-label="角度选项"><svg class="icon-12"><use href="#down"/></svg></button></div>
                    <button class="icon-btn flip" aria-label="水平翻转"><svg class="icon-18"><use href="#reflect"/></svg></button>
                    <button class="icon-btn" aria-label="垂直翻转"><svg class="icon-18 turned"><use href="#reflect"/></svg></button>
                </div>
                <button class="more" aria-label="更多变换选项"><svg class="icon-dots"><use href="#dots"/></svg></button>
            </section>
            <section class="prop-section">
                <h2>外观</h2>
                <div class="look-row first"><i class="look-chip"></i><span>填色</span></div>
                <div class="look-row"><i class="look-chip ring"></i><label class="link-label" for="strokePt">描边</label>
                    <div class="combo"><button class="drop" aria-label="调整描边"><svg class="icon-spin"><use href="#spin"/></svg></button><input class="w-42" type="text" id="strokePt" value="1 pt"><button class="drop" aria-label="描边列表"><svg class="icon-12"><use href="#down"/></svg></button></div>
                </div>
                <div class="look-row"><i class="look-chip checker"></i><label class="link-label" for="opacityPct">不透明度</label>
                    <div class="combo"><input class="w-64" type="text" id="opacityPct" value="100%"><button class="drop" aria-label="不透明度滑块"><svg class="icon-12"><use href="#right"/></svg></button></div>
                </div>
                <button class="fx">fx.</button>
                <button class="more" aria-label="更多外观选项"><svg class="icon-dots"><use href="#dots"/></svg></button>
            </section>
            <section class="prop-section">
                <h2>对齐</h2>
                <div class="align-row">
                    <button class="icon-btn" aria-label="对齐方式"><svg class="icon-wide"><use href="#align-to"/></svg></button>
                    <button class="icon-btn" aria-label="左对齐"><svg class="icon"><use href="#al-left"/></svg></button>
                    <button class="icon-btn" aria-label="水平居中"><svg class="icon"><use href="#al-hc"/></svg></button>
                    <button class="icon-btn" aria-label="右对齐"><svg class="icon"><use href="#al-right"/></svg></button>
                    <button class="icon-btn" aria-label="顶对齐"><svg class="icon"><use href="#al-top"/></svg></button>
                    <button class="icon-btn" aria-label="垂直居中"><svg class="icon"><use href="#al-vc"/></svg></button>
                    <button class="icon-btn" aria-label="底对齐"><svg class="icon"><use href="#al-bottom"/></svg></button>
                </div>
                <button class="more" aria-label="更多对齐选项"><svg class="icon-dots"><use href="#dots"/></svg></button>
            </section>
            <section class="prop-section quick">
                <h2>快速操作</h2>
                <div class="actions">
                    <div class="pair"><button>偏移路径</button><button>扩展形状</button></div>
                    <button>排列</button>
                    <button>重新着色</button>
                    <div class="split"><button>启动全局编辑</button><button aria-label="全局编辑选项"><svg class="icon-12"><use href="#down"/></svg></button></div>
                </div>
            </section>
        </aside>
    </main>

    <!-- floating palettes -->
    <div class="palette pens">
        <div class="palette-head"><svg class="icon-12"><use href="#collapse"/></svg><svg class="icon-12"><use href="#close"/></svg></div>
        <span class="grip"></span>
        <div class="palette-tools">
            <button aria-label="钢笔工具"><svg class="icon"><use href="#pen"/></svg></button>
            <button aria-label="添加锚点"><svg class="icon-28"><use href="#pen-add"/></svg></button>
            <button aria-label="删除锚点"><svg class="icon-28"><use href="#pen-remove"/></svg></button>
            <button aria-label="锚点"><svg class="icon"><use href="#anchor"/></svg></button>
        </div>
    </div>
    <div class="palette shapes">
        <div class="palette-head"><svg class="icon-12"><use href="#collapse"/></svg><svg class="icon-12"><use href="#close"/></svg></div>
        <span class="grip"></span>
        <div class="palette-tools">
            <button aria-label="矩形形状"><svg class="icon"><use href="#rect"/></svg></button>
            <button aria-label="圆角矩形"><svg class="icon"><use href="#round-rect"/></svg></button>
            <button aria-label="椭圆"><svg class="icon"><use href="#ellipse"/></svg></button>
            <button aria-label="多边形"><svg class="icon"><use href="#polygon"/></svg></button>
            <button aria-label="星形"><svg class="icon"><use href="#star"/></svg></button>
            <button aria-label="光晕"><svg class="icon"><use href="#flare"/></svg></button>
        </div>
    </div>
    <div class="palette rotation">
        <div class="palette-head"><svg class="icon-12"><use href="#collapse"/></svg><svg class="icon-12"><use href="#close"/></svg></div>
        <span class="grip"></span>
        <div class="palette-tools">
            <button aria-label="旋转工具"><svg class="icon-22"><use href="#rotate"/></svg></button>
            <button aria-label="镜像"><svg class="icon"><use href="#reflect"/></svg></button>
        </div>
    </div>
    <div class="palette transform">
        <div class="palette-head"></div>
        <span class="grip"></span>
        <button class="top" aria-label="限制"><svg class="icon-22"><use href="#constrain"/></svg></button>
        <button class="active" aria-label="自由变换模式"><svg class="icon"><use href="#touch"/></svg></button>
        <button aria-label="透视扭曲"><svg class="icon-22"><use href="#persp-distort"/></svg></button>
        <button aria-label="自由扭曲"><svg class="icon-22"><use href="#free-distort"/></svg></button>
    </div>
    <div class="marker"></div>

    <div class="float-panel align-panel">
        <div class="palette-head"><svg class="icon-12"><use href="#collapse"/></svg><svg class="icon-12"><use href="#close"/></svg></div>
        <div class="panel-tabs">
            <button>变换</button>
            <button class="active"><svg class="icon-updown"><use href="#updown"/></svg>对齐</button>
            <button>路径查找器</button>
            <span class="tab-end"><svg class="icon-12"><use href="#menu"/></svg></span>
        </div>
        <p>对齐对象：</p>
        <div class="align-objects">
            <button class="icon-btn" aria-label="左对齐"><svg class="icon"><use href="#al-left"/></svg></button>
            <button class="icon-btn" aria-label="水平居中"><svg class="icon"><use href="#al-hc"/></svg></button>
            <button class="icon-btn" aria-label="右对齐"><svg class="icon"><use href="#al-right"/></svg></button>
            <button class="icon-btn second" aria-label="顶对齐"><svg class="icon"><use href="#al-top"/></svg></button>
            <button class="icon-btn" aria-label="垂直居中"><svg class="icon"><use href="#al-vc"/></svg></button>
            <button class="icon-btn" aria-label="底对齐"><svg class="icon"><use href="#al-bottom"/></svg></button>
        </div>
    </div>

    <div class="float-panel layers-panel">
        <div class="panel-tabs">
            <button class="active">图层</button>
            <button>资源导出</button>
            <button>画板</button>
            <span class="tab-end"><svg class="icon-16"><use href="#expand"/></svg><i></i><svg class="icon-12"><use href="#menu"/></svg></span>
        </div>
        <div class="layer-list">
            <div class="layer-row">
                <svg class="icon-eye"><use href="#eye"/></svg>
                <span class="lock"></span>
                <span class="layer-color"></span>
                <svg class="icon-12 white"><use href="#right"/></svg>
                <span class="layer-thumb"></span>
                <span class="layer-name">图层 1</span>
                <span class="target"></span>
                <span class="selected-art"></span>
            </div>
        </div>
        <div class="layer-foot">
            <span>1...</span>
            <button class="icon-btn dim" aria-label="收集以导出"><svg class="icon-18"><use href="#export"/></svg></button>
            <button class="icon-btn" aria-label="定位对象"><svg class="icon-20"><use href="#zoom"/></svg></button>
            <button class="icon-btn dim" aria-label="剪切蒙版"><svg class="icon-20"><use href="#mask"/></svg></button>
            <button class="icon-btn dim" aria-label="新建子图层"><svg class="icon-20"><use href="#sublayer"/></svg></button>
            <button class="icon-btn" aria-label="新建图层"><svg class="icon-20"><use href="#new-layer"/></svg></button>
            <button class="icon-btn dim" aria-label="删除"><svg class="icon-20"><use href="#trash"/></svg></button>
        </div>
        <div class="resize"><span class="grip"></span></div>
    </div>

    <div class="meter"></div>
    <div class="screen-edge"></div>

    <div class="watermark">
        <div class="brand">
            <span class="bai">Bai</span>
            <svg class="paw" viewBox="0 0 96 104">
                <g fill="currentColor">
                    <ellipse cx="12.500" cy="39" rx="12" ry="16"/>
                    <ellipse cx="36" cy="16.500" rx="11.500" ry="16"/>
                    <ellipse cx="64.500" cy="18.500" rx="12" ry="16" transform="rotate(8 64.500 18.500)"/>
                    <ellipse cx="83" cy="46" rx="12" ry="15.500"/>
                    <path d="M47 42c14 0 20 14 30 23 8 7 12 14 10 24-2 9-10 14-20 13-8-1-12-3-20-3s-14 4-24 2C10 99 5 89 8 79c2-8 11-12 17-21 6-8 12-16 22-16z"/>
                </g>
                <text x="18" y="93" class="du">du</text>
            </svg>
            <span class="jingyan">经验</span>
        </div>
        <div class="site">jingyan.baidu.com</div>
    </div>
</body>
</html>
```

FILE: styles.css
```css
* {
    box-sizing: border-box;
}
body {
    margin: 0;
    height: 100vh;
    display: flex;
    flex-direction: column;
    overflow: hidden;
    position: relative;
    background-color: #535353;
    color: #c8c8c8;
    font-family: "Noto Sans", "Noto Sans CJK SC", sans-serif;
    font-size: 15px;
    line-height: 18px;
}
button {
    display: flex;
    align-items: center;
    justify-content: center;
    padding: 0;
    border: none;
    background: none;
    color: inherit;
    font: inherit;
    white-space: nowrap;
}
input {
    min-width: 0;
    padding: 0 4px;
    border: none;
    background-color: #454545;
    color: #f0f0f0;
    font: 13px/18px "Liberation Mono", monospace;
}
svg {
    flex: none;
}
h2, p {
    margin: 0;
    font-size: 15px;
    font-weight: normal;
    line-height: 18px;
}
a {
    color: inherit;
    text-decoration: none;
}

/* icon sizes */
.sprite { position: absolute; }
.icon-12 { width: 12px; height: 12px; }
.icon-16 { width: 16px; height: 16px; }
.icon-18 { width: 18px; height: 18px; }
.icon-20 { width: 20px; height: 20px; }
.icon-22 { width: 22px; height: 22px; }
.icon { width: 24px; height: 24px; }
.icon-26 { width: 26px; height: 24px; }
.icon-28 { width: 28px; height: 24px; }
.icon-wide { width: 34px; height: 24px; }
.icon-spin { width: 12px; height: 20px; }
.icon-dots { width: 18px; height: 6px; }
.icon-eye { width: 16px; height: 12px; }
.icon-angle { width: 20px; height: 16px; }
.icon-updown { width: 8px; height: 12px; margin: 2px 4px 0 0; color: #aaa; }
.icon-btn { color: #c2c2c2; }
.white { color: #fff; }
.dim { color: #6e6e6e; }
.turned { transform: rotate(90deg); }

/* title bar */
.title-bar {
    flex: none;
    display: flex;
    align-items: center;
    height: 44px;
    padding: 0 0 2px 18px;
    border-top: 1px solid #3c3c3c;
    border-bottom: 1px solid #3e3e3e;
}
.logo {
    width: 20px;
    height: 19px;
    margin-right: 17px;
    border-radius: 4px;
    background-color: #330000;
    color: #ff9a00;
    font: bold 12px/19px "Open Sans", sans-serif;
    text-align: center;
}
.rule {
    width: 2px;
    height: 24px;
    background-color: #5f5f5f;
}
.title-bar > .icon-btn {
    margin-right: 15px;
}
.menus {
    display: flex;
    gap: 17px;
    padding: 0 12px 0 20px;
    color: #f0f0f0;
    font-size: 16px;
}
.title-tools {
    display: flex;
    align-items: center;
    gap: 19px;
    margin-left: auto;
}
.window-buttons {
    align-self: flex-start;
    display: flex;
    height: 24px;
    margin: 0 9px 0 15px;
    border: 1px solid #3e3e3e;
    border-radius: 0 0 3px 3px;
    color: #9a9a9a;
}
.window-buttons button {
    width: 34px;
}
.window-buttons button + button {
    border-left: 1px solid #3e3e3e;
}
.min {
    width: 13px;
    height: 4px;
    margin-top: 6px;
    background-color: #9a9a9a;
}
.max {
    width: 13px;
    height: 10px;
    border: 3px solid #9a9a9a;
}

/* control bar */
.control-bar {
    flex: none;
    display: flex;
    align-items: center;
    gap: 7px;
    height: 43px;
    margin: 0 5px;
    padding: 0 0 2px 5px;
    border-left: 1px solid #3e3e3e;
    border-right: 1px solid #3e3e3e;
}
.control-bar > * {
    flex: none;
}
.grip-v {
    width: 4px;
    height: 24px;
    background: repeating-linear-gradient(#3d3d3d 0 1px, transparent 1px 3px);
}
.object-type {
    width: 104px;
    padding-left: 2px;
}
.sep {
    width: 1px;
    height: 32px;
    background-color: #454545;
}
.combo {
    display: flex;
    height: 26px;
    border: 1px solid #636363;
    border-radius: 3px;
    background-color: #4b4b4b;
}
.drop {
    width: 21px;
    color: #f0f0f0;
}
.drop + input, input + .drop {
    border-left: 1px solid #5c5c5c;
}
.w-42 { width: 43px; }
.w-48 { width: 48px; }
.w-50 { width: 50px; }
.w-55 { width: 55px; }
.w-64 { width: 64px; }
.swatch {
    width: 24px;
    background-color: #fff;
}
.swatch.gray {
    background-color: #e3e3e3;
}
.stroked {
    border: 1px solid #fff;
    background-color: #000;
}
.stroked i {
    width: 9px;
    height: 9px;
    border: 2px solid #fff;
    outline: 1px solid #000;
    background-color: #fff;
    box-shadow: inset 0 0 0 1px #000;
}
.link-label {
    border-bottom: 2px dotted #c8c8c8;
    color: #f0f0f0;
}
.control-bar .link-label, .style-label {
    font-size: 14px;
}
.control-bar .transform-link {
    margin: 0 2px;
    font-size: 15px;
}
.stroke-label {
    margin-left: 9px;
}
.opacity-label {
    margin-left: 4px;
}
.profile {
    gap: 8px;
    width: 112px;
    background-color: #e3e3e3;
    color: #222;
}
.profile i {
    width: 63px;
    height: 4px;
    background-color: #000;
}
.profile.basic {
    width: 109px;
}
.profile.basic i {
    width: 60px;
    height: 3px;
}
.wheel {
    margin: 0 4px 0 7px;
}
.align-group {
    display: flex;
    gap: 10px;
    padding: 0 4px;
}
.align-to {
    margin-right: 8px;
}
.isolate {
    margin: 0 6px;
}
.bright {
    gap: 6px;
    margin-right: 2px;
}
.edit {
    margin-left: 4px;
}
.bright .icon-12 {
    color: #fff;
}
.control-end {
    display: flex;
    align-items: center;
    gap: 12px;
    margin-left: auto;
    padding-right: 21px;
}
.dim-arrow {
    gap: 5px;
}
.dim-arrow .icon-12 {
    margin-right: 12px;
    color: #777;
}

/* workspace */
.workspace {
    flex: 1;
    min-height: 0;
    display: flex;
    gap: 2px;
    margin: 0 5px 6px;
    background-color: #3a3a3a;
    border: 1px solid #3a3a3a;
    border-top: none;
}
.workspace > * {
    background-color: #535353;
}
.dock-head {
    display: flex;
    align-items: center;
    justify-content: flex-end;
    height: 15px;
    padding: 0 6px;
    border-bottom: 1px solid #363636;
    background-color: #424242;
    color: #d8d8d8;
}
.dock-head.left {
    justify-content: flex-start;
}
.grip {
    display: block;
    width: 24px;
    height: 5px;
    margin: 0 auto;
    background: repeating-linear-gradient(90deg, #3a3a3a 0 1px, transparent 1px 3px);
}

.toolbar {
    flex: none;
    width: 89px;
    color: #c2c2c2;
}
.toolbar > .grip {
    margin-top: 4px;
}
.tools {
    display: grid;
    grid-template-columns: 34px 34px;
    grid-auto-rows: 28px;
    gap: 2px 4px;
    padding: 17px 8px 2px 9px;
    border-bottom: 1px solid #464646;
}
.tools button {
    position: relative;
    border-radius: 2px;
}
.tools button::after {
    content: "";
    position: absolute;
    right: 1px;
    bottom: 1px;
    border: 2px solid transparent;
    border-right-color: #c2c2c2;
    border-bottom-color: #c2c2c2;
}
.tools .solo::after {
    display: none;
}
.active {
    background-color: #2e2e2e;
}
.color-box {
    display: grid;
    grid-template-columns: 23px 21px 22px;
    grid-template-rows: 23px 21px 23px;
    margin: 6px 0 8px 7px;
}
.fore {
    grid-area: 1 / 1 / 3 / 3;
    z-index: 1;
    border: 1px solid #2e2e2e;
    background-color: #fff;
}
.swap {
    grid-area: 1 / 3;
    align-items: flex-start;
    padding-left: 14px;
}
.back {
    grid-area: 2 / 2 / 4 / 4;
    display: grid;
    place-items: center;
    border: 1px solid #fff;
    outline: 1px solid #2e2e2e;
    background-color: #000;
}
.back i {
    width: 21px;
    height: 21px;
    border: 1px solid #fff;
    background-color: #535353;
}
.defaults {
    grid-area: 3 / 1;
    align-self: end;
    width: 10px;
    height: 10px;
    margin-bottom: 5px;
    border: 1px solid #222;
    background-color: #fff;
    box-shadow: 4px 4px 0 #111, 5px 5px 0 #bbb;
}
.modes {
    display: grid;
    grid-template-columns: repeat(3, 1fr);
    width: 74px;
    height: 26px;
    margin: 0 0 6px 6px;
    border: 1px solid #5c5c5c;
    border-radius: 3px;
}
.modes button + button {
    border-left: 1px solid #5c5c5c;
}
.modes.draw {
    height: 24px;
}
.chip {
    width: 16px;
    height: 16px;
    border: 2px solid #000;
    background-color: #fff;
}
.chip.fade {
    background: linear-gradient(90deg, #eee, #444);
}
.chip.none {
    background: linear-gradient(135deg, #fff 38%, #f00 38% 62%, #fff 62%);
}
.screen-mode {
    margin: 8px 0 18px 30px;
}
.more-tools {
    width: 100%;
    height: 29px;
    padding: 0 2px 11px 0;
    border-bottom: 1px solid #3a3a3a;
}

/* document */
.document {
    flex: 1;
    min-width: 0;
    display: flex;
    flex-direction: column;
}
.doc-tabs {
    flex: none;
    display: flex;
    height: 35px;
    background-color: #424242;
}
.doc-tab {
    gap: 20px;
    padding: 0 7px 0 12px;
    border-right: 1px solid #383838;
    color: #a5a5a5;
    font-size: 16px;
}
.doc-tab.active {
    background-color: #535353;
    color: #f0f0f0;
}
.view {
    flex: 1;
    min-height: 0;
    display: flex;
}
.canvas {
    flex: 1;
    position: relative;
    overflow: hidden;
    background-color: #606060;
}
.artboard {
    position: absolute;
    left: 372px;
    top: 45px;
    width: 596px;
    height: 843px;
    border: 1px solid #000;
    background-color: #fff;
}
.selection {
    position: absolute;
    left: 98px;
    top: 178px;
    width: 240px;
    height: 217px;
}
.v-scroll {
    display: flex;
    align-items: flex-end;
    justify-content: center;
    width: 20px;
    padding-bottom: 4px;
    background-color: #4b4b4b;
    color: #a8a8a8;
}
.status {
    flex: none;
    display: flex;
    gap: 5px;
    height: 19px;
    padding-left: 4px;
    overflow: hidden;
}
.status .combo {
    height: 20px;
}
.pager {
    display: flex;
    align-items: center;
    justify-content: center;
    gap: 10px;
    width: 40px;
    color: #777;
}
.tool-name {
    width: 250px;
    margin-left: 3px;
    border-left: 1px solid #464646;
    border-right: 1px solid #464646;
    line-height: 20px;
    text-align: center;
}
.status-more {
    width: 12px;
}
.h-scroll {
    flex: 1;
    display: flex;
    align-items: center;
    justify-content: space-between;
    margin-right: 20px;
    padding: 0 5px;
    background-color: #4b4b4b;
    color: #b0b0b0;
}
.thumb {
    width: 32px;
    height: 16px;
    border-radius: 8px;
    background-color: #666;
}

/* icon dock */
.dock {
    flex: none;
    width: 48px;
    color: #c2c2c2;
}
.dock-group {
    padding: 4px 6px 3px;
    border-bottom: 1px solid #363636;
}
.dock-group::before {
    content: "";
    display: block;
    width: 24px;
    height: 5px;
    margin: 0 auto 5px;
    background: repeating-linear-gradient(90deg, #3a3a3a 0 1px, transparent 1px 3px);
}
.dock-group button {
    width: 100%;
    height: 29px;
    margin: 3px 0;
    border-radius: 2px;
}
.dock-group button + button {
    margin-top: 6px;
}
.char {
    font: bold 24px/24px "Open Sans", sans-serif;
}
.char::after {
    content: "";
    width: 1px;
    height: 22px;
    background-color: #c2c2c2;
}

/* properties */
.properties {
    flex: none;
    width: 313px;
}
.panel-tabs {
    display: flex;
    height: 34px;
    background-color: #424242;
    color: #a5a5a5;
}
.panel-tabs button {
    padding: 0 11px 3px;
    border-right: 1px solid #3a3a3a;
    border-bottom: 1px solid #3a3a3a;
}
.panel-tabs .active {
    border-bottom-color: #535353;
    background-color: #535353;
    color: #fff;
}
.properties .panel-tabs button {
    padding: 0 12px 3px;
}
.properties .panel-tabs button + button {
    padding-right: 22px;
}
.prop-section {
    margin-right: 16px;
    padding: 12px 0 6px 13px;
    border-bottom: 1px solid #494949;
}
.prop-section:nth-of-type(1) {
    padding: 11px 0 11px 13px;
}
.transform-grid {
    display: grid;
    grid-template-columns: 26px 37px 71px 51px 71px 1fr;
    gap: 6px 0;
    align-items: center;
    margin-top: 9px;
}
.transform-grid label {
    padding-left: 12px;
    font: 14px/18px "Liberation Mono", "Noto Sans CJK SC", monospace;
    white-space: nowrap;
}
.transform-grid input + label {
    padding-left: 20px;
}
.transform-grid input {
    height: 26px;
    border: 1px solid #636363;
    border-radius: 3px;
}
.ref-point {
    grid-row: 1 / 3;
    width: 26px;
    height: 26px;
}
.unlink {
    grid-area: 1 / 6 / 3 / 7;
    padding-left: 6px;
}
.angle-row {
    display: flex;
    align-items: center;
    gap: 2px;
    margin: 6px 0 7px 30px;
}
.angle-row .combo {
    margin-right: 51px;
}
.flip {
    margin-right: 10px;
}
.more {
    width: 18px;
    height: 14px;
    margin: 0 8px 0 auto;
    color: #c2c2c2;
}
.look-row {
    display: flex;
    align-items: center;
    height: 36px;
}
.look-row.first {
    margin-top: 8px;
}
.look-row > span, .look-row .link-label {
    margin-left: 15px;
}
.look-row .combo {
    width: 88px;
    margin: 0 83px 0 auto;
}
.look-chip {
    width: 22px;
    height: 22px;
    border: 1px solid #222;
    background-color: #fff;
}
.ring {
    border: 1px solid #fff;
    outline: 1px solid #222;
    background: #535353;
    box-shadow: inset 0 0 0 4px #000, inset 0 0 0 5px #fff, inset 0 0 0 6px #000;
}
.checker {
    border: 1px solid #aaa;
    background: conic-gradient(#555 25%, #777 0 50%, #555 0 75%, #777 0) 0 0 / 10px 10px;
}
.fx {
    height: 46px;
    padding-left: 9px;
    color: #d0d0d0;
    font: italic 17px/20px "Noto Sans", sans-serif;
}
.align-row {
    display: flex;
    gap: 14px;
    margin: 17px 0 13px;
}
.quick {
    padding-top: 17px;
    border-bottom: none;
}
.actions {
    display: grid;
    gap: 13px;
    margin: 11px 1px 0 0;
}
.actions button {
    height: 26px;
    border: 1px solid #737373;
    border-radius: 3px;
    color: #f0f0f0;
}
.pair {
    display: grid;
    grid-template-columns: 1fr 1fr;
    gap: 13px;
}
.split {
    display: grid;
    grid-template-columns: 1fr 28px;
}

/* floating palettes */
.palette {
    position: absolute;
    border: 1px solid #383838;
    border-radius: 3px 3px 0 0;
    background-color: #535353;
    color: #c2c2c2;
    box-shadow: 0 1px 4px rgba(0, 0, 0, 0.3);
}
.palette-head {
    display: flex;
    align-items: center;
    justify-content: flex-end;
    gap: 10px;
    height: 16px;
    padding-right: 5px;
    border-bottom: 1px solid #383838;
    background-color: #424242;
    color: #c2c2c2;
}
.palette .grip {
    margin-top: 4px;
}
.palette-tools {
    display: flex;
    justify-content: space-between;
    padding: 18px 8px 0;
}
.palette-tools button {
    height: 24px;
}
.pens {
    left: 154px;
    top: 168px;
    width: 168px;
    height: 75px;
}
.pens .palette-tools {
    padding-left: 11px;
    padding-right: 16px;
}
.shapes {
    left: 163px;
    top: 272px;
    width: 238px;
    height: 75px;
}
.shapes .palette-tools {
    padding-right: 17px;
}
.rotation {
    left: 429px;
    top: 189px;
    width: 88px;
    height: 75px;
}
.rotation .palette-tools {
    padding-right: 18px;
}
.transform {
    left: 111px;
    top: 167px;
    width: 47px;
    height: 180px;
}
.transform .grip {
    margin: 8px auto 13px;
}
.transform button {
    width: 34px;
    height: 28px;
    margin: 6px auto;
    border-radius: 3px;
}
.transform .top {
    padding-bottom: 4px;
}
.marker {
    position: absolute;
    left: 100px;
    top: 157px;
    width: 72px;
    height: 196px;
    border: 7px solid #fc3838;
}

/* align and layers panels */
.float-panel {
    position: absolute;
    border: 1px solid #383838;
    background-color: #535353;
    box-shadow: 0 1px 4px rgba(0, 0, 0, 0.3);
}
.align-panel {
    right: 378px;
    top: 75px;
    width: 302px;
    height: 268px;
    border-radius: 4px 4px 0 0;
}
.align-panel .palette-head {
    height: 15px;
}
.align-panel p {
    margin: 7px 6px 8px;
}
.tab-end {
    display: flex;
    align-items: center;
    gap: 8px;
    margin-left: auto;
    padding-right: 7px;
    color: #b5b5b5;
}
.tab-end i {
    width: 1px;
    height: 14px;
    background-color: #aaa;
}
.align-objects {
    display: flex;
    gap: 22px;
    padding: 4px 11px;
    color: #c2c2c2;
}
.align-objects .second {
    margin-left: 25px;
}
.layers-panel {
    display: flex;
    flex-direction: column;
    right: 371px;
    top: 184px;
    width: 302px;
    height: 606px;
    border-top-width: 6px;
}
.layers-panel .panel-tabs {
    flex: none;
}
.layers-panel .panel-tabs button {
    padding: 0 11px 3px 12px;
}
.layer-list {
    flex: 1;
    margin: 0 6px;
    padding-top: 7px;
    border: 1px solid #5c5c5c;
    border-top: none;
}
.layer-row {
    display: flex;
    align-items: center;
    height: 28px;
    padding-left: 5px;
    border-top: 1px solid #5c5c5c;
    border-bottom: 1px solid #5c5c5c;
}
.lock {
    width: 27px;
    height: 26px;
    margin: 0 3px 0 5px;
    border-left: 1px solid #5c5c5c;
    border-right: 1px solid #5c5c5c;
}
.layer-color {
    width: 4px;
    height: 23px;
    margin-left: -1px;
    background-color: #4f80ff;
}
.layer-row .white {
    margin: 0 12px 0 7px;
}
.layer-thumb {
    width: 24px;
    height: 24px;
    border: 1px solid #222;
    background-color: #fff;
}
.layer-name {
    flex: 1;
    padding-left: 6px;
    color: #e0e0e0;
}
.target {
    width: 11px;
    height: 11px;
    margin-right: 7px;
    border: 1px solid #ccc;
    border-radius: 50%;
}
.selected-art {
    width: 10px;
    height: 10px;
    margin-right: 9px;
    border: 1px solid #222;
    background-color: #4f80ff;
}
.layer-foot {
    flex: none;
    display: flex;
    align-items: center;
    gap: 12px;
    height: 24px;
    padding: 0 31px 0 6px;
}
.layer-foot span {
    margin-right: auto;
    font: 13px/18px "Liberation Mono", monospace;
}
.layer-foot .dim {
    color: #707070;
}
.resize {
    flex: none;
    height: 10px;
    padding-top: 2px;
    border-top: 2px solid #383838;
}

/* desktop meter and window edge */
.meter {
    position: absolute;
    left: 1px;
    top: 847px;
    width: 10px;
    height: 60px;
    padding: 1px;
    border: 1px solid #43b8f0;
    border-radius: 2px;
    background: linear-gradient(#1d3a52 12%, #2ec95a 12%) content-box, #16324a;
}
.screen-edge {
    position: absolute;
    right: 0;
    top: 0;
    width: 376px;
    height: 2px;
    background-color: #fff;
    box-shadow: -103px 0 0 #2a2a2a;
}

/* watermark */
.watermark {
    position: absolute;
    right: 98px;
    bottom: 40px;
    color: #d0d0d0;
}
.brand {
    display: flex;
    align-items: flex-end;
    margin-bottom: 2px;
}
.bai {
    font: bold 72px/56px "Liberation Sans", sans-serif;
}
.paw {
    width: 96px;
    height: 104px;
}
.du {
    fill: #535353;
    font: bold 48px "Liberation Sans", sans-serif;
}
.jingyan {
    margin-left: 4px;
    font: 900 54px/62px "Noto Sans CJK SC", sans-serif;
}
.site {
    color: #e2e2e2;
    font: 38px/48px "Noto Sans", sans-serif;
}
```
